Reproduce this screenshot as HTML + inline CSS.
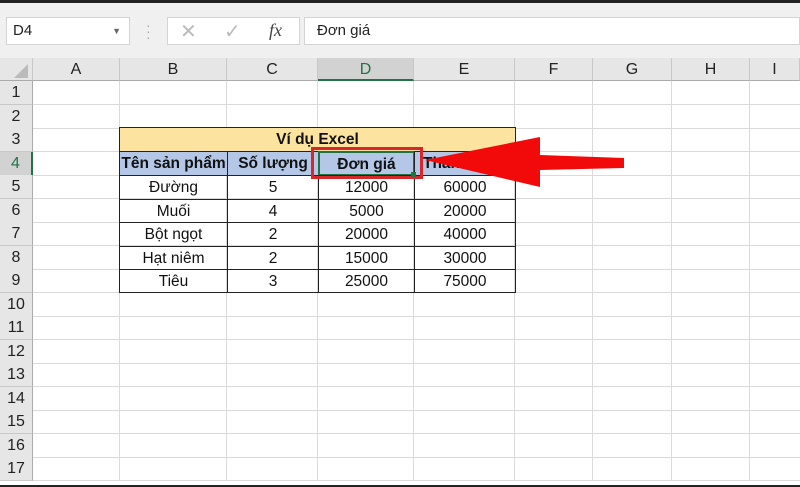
<!DOCTYPE html>
<html><head><meta charset="utf-8"><style>
*{margin:0;padding:0;box-sizing:border-box}
body{width:800px;height:487px;overflow:hidden;background:#fff;font-family:"Liberation Sans","DejaVu Sans",sans-serif;position:relative}
.a{position:absolute}
.ch{position:absolute;top:58px;height:23px;background:#e6e6e6;border-right:1px solid #c8c8c8;border-bottom:1px solid #ababab;text-align:center;font-size:16px;line-height:24px;color:#222}
.rh{position:absolute;left:0;width:33px;height:24px;background:#e6e6e6;border-bottom:1px solid #c8c8c8;border-right:1px solid #ababab;text-align:center;font-size:16px;line-height:24px;color:#222}
.vl{position:absolute;top:81px;height:400px;width:1px;background:#dadada}
.hl{position:absolute;left:33px;width:767px;height:1px;background:#dadada}
.c{position:absolute;text-align:center;font-size:15.5px;line-height:23px;color:#111;border:1px solid #222}
</style></head><body>
<div class="a" style="left:0;top:0;width:800px;height:3px;background:#222"></div>
<div class="a" style="left:0;top:3px;width:800px;height:55px;background:#f0f0f0"></div>
<div class="a" style="left:6px;top:17px;width:124px;height:28px;background:#fff;border:1px solid #d4d4d4;font-size:15px;line-height:26px;padding-left:6px;color:#222">D4<span style="position:absolute;right:8px;top:0;font-size:9px;color:#666">▼</span></div>
<div class="a" style="left:146px;top:22px;color:#aaa;font-size:14px;line-height:6px">·<br>·<br>·</div>
<div class="a" style="left:167px;top:17px;width:133px;height:28px;background:#fff;border:1px solid #d4d4d4"></div>
<div class="a" style="left:180px;top:19px;color:#bbb;font-size:20px">✕</div>
<div class="a" style="left:224px;top:19px;color:#bbb;font-size:20px">✓</div>
<div class="a" style="left:269px;top:20px;color:#444;font-size:18px;font-style:italic;font-family:'Liberation Serif',serif">fx</div>
<div class="a" style="left:304px;top:17px;width:496px;height:28px;background:#fff;border:1px solid #d4d4d4;font-size:15px;line-height:26px;padding-left:12px;color:#222">Đơn giá</div>

<div class="ch" style="left:0;width:33px"></div>
<div class="a" style="left:14px;top:64px;width:0;height:0;border-left:14px solid transparent;border-bottom:14px solid #bbb"></div>
<div class="ch" style="left:33px;width:87px">A</div>
<div class="ch" style="left:120px;width:107px">B</div>
<div class="ch" style="left:227px;width:91px">C</div>
<div class="ch" style="left:318px;width:96px;background:#d2d2d2;color:#217346;border-bottom:2px solid #217346">D</div>
<div class="ch" style="left:414px;width:101px">E</div>
<div class="ch" style="left:515px;width:78px">F</div>
<div class="ch" style="left:593px;width:79px">G</div>
<div class="ch" style="left:672px;width:78px">H</div>
<div class="ch" style="left:750px;width:50px">I</div>

<div class="vl" style="left:119px"></div><div class="vl" style="left:226px"></div><div class="vl" style="left:317px"></div><div class="vl" style="left:413px"></div><div class="vl" style="left:514px"></div><div class="vl" style="left:592px"></div><div class="vl" style="left:671px"></div><div class="vl" style="left:749px"></div>

<div class="hl" style="top:104px"></div><div class="hl" style="top:128px"></div><div class="hl" style="top:151px"></div><div class="hl" style="top:175px"></div><div class="hl" style="top:198px"></div><div class="hl" style="top:222px"></div><div class="hl" style="top:245px"></div><div class="hl" style="top:269px"></div><div class="hl" style="top:292px"></div><div class="hl" style="top:316px"></div><div class="hl" style="top:339px"></div><div class="hl" style="top:363px"></div><div class="hl" style="top:386px"></div><div class="hl" style="top:410px"></div><div class="hl" style="top:433px"></div><div class="hl" style="top:457px"></div><div class="hl" style="top:480px"></div>

<div class="rh" style="top:81px">1</div><div class="rh" style="top:104.5px">2</div><div class="rh" style="top:128px">3</div><div class="rh" style="top:151.5px;background:#d2d2d2;color:#217346;border-right:2px solid #217346">4</div><div class="rh" style="top:175px">5</div><div class="rh" style="top:198.5px">6</div><div class="rh" style="top:222px">7</div><div class="rh" style="top:245.5px">8</div><div class="rh" style="top:269px">9</div><div class="rh" style="top:292.5px">10</div><div class="rh" style="top:316px">11</div><div class="rh" style="top:339.5px">12</div><div class="rh" style="top:363px">13</div><div class="rh" style="top:386.5px">14</div><div class="rh" style="top:410px">15</div><div class="rh" style="top:433.5px">16</div><div class="rh" style="top:457px">17</div>

<div class="c" style="left:119px;top:127px;width:397px;height:25px;background:#fce4a0;font-weight:bold">Ví dụ Excel</div>
<div class="c" style="left:119px;top:151px;width:109px;height:25px;background:#b4c7e7;font-weight:bold">Tên sản phẩm</div>
<div class="c" style="left:227px;top:151px;width:92px;height:25px;background:#b4c7e7;font-weight:bold">Số lượng</div>
<div class="c" style="left:318px;top:151px;width:97px;height:25px;background:#b4c7e7;font-weight:bold;border:2px solid #217346">Đơn giá</div>
<div class="c" style="left:414px;top:151px;width:102px;height:25px;background:#b4c7e7;font-weight:bold;text-align:left;padding-left:8px">Thành tiền</div>

<div class="c" style="left:119px;top:175px;width:109px;height:25px">Đường</div><div class="c" style="left:227px;top:175px;width:92px;height:25px">5</div><div class="c" style="left:318px;top:175px;width:97px;height:25px">12000</div><div class="c" style="left:414px;top:175px;width:102px;height:25px">60000</div>
<div class="c" style="left:119px;top:199px;width:109px;height:24px">Muối</div><div class="c" style="left:227px;top:199px;width:92px;height:24px">4</div><div class="c" style="left:318px;top:199px;width:97px;height:24px">5000</div><div class="c" style="left:414px;top:199px;width:102px;height:24px">20000</div>
<div class="c" style="left:119px;top:222px;width:109px;height:25px">Bột ngọt</div><div class="c" style="left:227px;top:222px;width:92px;height:25px">2</div><div class="c" style="left:318px;top:222px;width:97px;height:25px">20000</div><div class="c" style="left:414px;top:222px;width:102px;height:25px">40000</div>
<div class="c" style="left:119px;top:246px;width:109px;height:24px">Hạt niêm</div><div class="c" style="left:227px;top:246px;width:92px;height:24px">2</div><div class="c" style="left:318px;top:246px;width:97px;height:24px">15000</div><div class="c" style="left:414px;top:246px;width:102px;height:24px">30000</div>
<div class="c" style="left:119px;top:269px;width:109px;height:24px">Tiêu</div><div class="c" style="left:227px;top:269px;width:92px;height:24px">3</div><div class="c" style="left:318px;top:269px;width:97px;height:24px">25000</div><div class="c" style="left:414px;top:269px;width:102px;height:24px">75000</div>

<div class="a" style="left:311px;top:147px;width:112px;height:32px;border:3px solid #d9262a"></div>
<div class="a" style="left:411px;top:172px;width:5px;height:5px;background:#217346"></div>
<svg class="a" style="left:0;top:0" width="800" height="487"><polygon points="425,160 540,137 540,155 624,158 624,168 540,170 540,187" fill="#f20a0a"/></svg>
<div class="a" style="left:0;top:485px;width:800px;height:2px;background:#222"></div>
</body></html>
